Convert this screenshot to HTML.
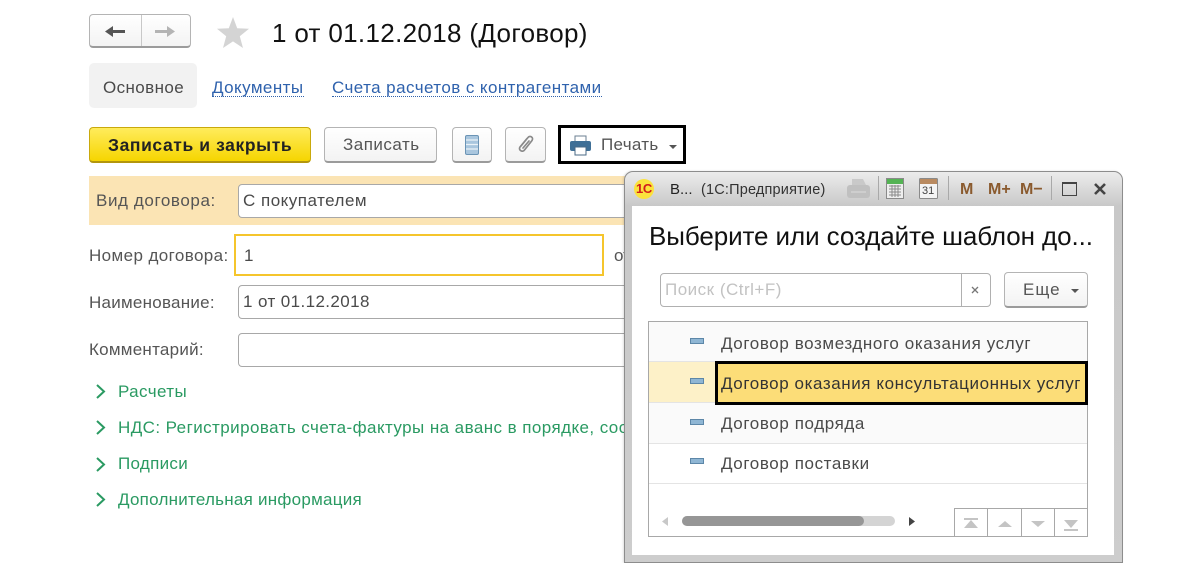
<!DOCTYPE html>
<html lang="ru"><head><meta charset="utf-8"><title>Договор</title>
<style>
html,body{margin:0;padding:0;background:#fff}
#p{position:relative;width:1200px;height:563px;overflow:hidden;background:#fff;font-family:"Liberation Sans",sans-serif;color:#4a4a4a;font-size:17px;filter:blur(.35px)}
.t{position:absolute;white-space:nowrap;line-height:20px;transform-origin:0 50%}
.b{position:absolute;box-sizing:border-box}
.btn{background:linear-gradient(#fff,#f3f3f3);border:1px solid #b4b4b4;border-bottom:2px solid #9b9b9b;border-radius:4px}
.inp{background:#fff;border:1px solid #a8a8a8;border-radius:4px}
.g{color:#2a9a62}
.l{color:#2f62ad;border-bottom:1px dotted #2f62ad;line-height:17px;letter-spacing:.43px}
.dash{position:absolute;left:690px;width:14px;height:6px;background:#8fb6d4;border:1px solid #5d87a8;box-sizing:border-box}
.r{letter-spacing:.6px}
svg{position:absolute;overflow:visible}
</style></head><body><div id="p">

<!-- nav -->
<div class="b btn" style="left:89px;top:14px;width:102px;height:34px"></div>
<div class="b" style="left:141px;top:15px;width:1px;height:31px;background:#c8c8c8"></div>
<svg style="left:105px;top:26px" width="20" height="12"><path d="M0 5.5 L8 0 V4 H20 V7 H8 V11 Z" fill="#555"/></svg>
<svg style="left:155px;top:26px" width="20" height="12"><path d="M20 5.5 L12 0 V4 H0 V7 H12 V11 Z" fill="#b4b4b4"/></svg>
<svg style="left:216px;top:17px" width="34" height="32"><path d="M17 0 L21.2 11.2 L33 11.8 L23.8 19.2 L27 31 L17 24.4 L7 31 L10.2 19.2 L1 11.8 L12.8 11.2 Z" fill="#d4d4d4"/></svg>
<div class="t" style="left:272px;top:18px;font-size:26px;line-height:30px;color:#111;letter-spacing:.33px">1 от 01.12.2018 (Договор)</div>

<!-- tabs -->
<div class="b" style="left:89px;top:63px;width:108px;height:45px;background:#f2f2f2;border-radius:5px"></div>
<div class="t" style="left:103px;top:78px;letter-spacing:.4px">Основное</div>
<div class="t l" style="left:212px;top:79px">Документы</div>
<div class="t l" style="left:332px;top:79px">Счета расчетов с контрагентами</div>

<!-- command bar -->
<div class="b" style="left:89px;top:127px;width:222px;height:36px;background:linear-gradient(#ffec5c,#f6d500);border:1px solid #c9a90c;border-bottom:2px solid #b3960d;border-radius:4px"></div>
<div class="t" style="left:108px;top:135px;font-weight:bold;color:#222;font-size:17.5px;letter-spacing:.6px">Записать и закрыть</div>
<div class="b btn" style="left:324px;top:127px;width:113px;height:36px"></div>
<div class="t" style="left:343px;top:135px;color:#555;letter-spacing:.5px">Записать</div>
<div class="b btn" style="left:452px;top:127px;width:40px;height:36px"></div>
<svg style="left:465px;top:135px" width="14" height="20"><rect x=".5" y=".5" width="13" height="19" rx="1.5" fill="#a9c6de" stroke="#6b94b5"/><path d="M1 5H13M1 9.5H13M1 14H13" stroke="#eaf2f8" stroke-width="1.2"/></svg>
<div class="b btn" style="left:505px;top:127px;width:41px;height:36px"></div>
<svg style="left:517px;top:134px" width="18" height="20" fill="none"><path d="M4 12 L11 3.5 C13 1 17 3.5 15 6.5 L7.5 16 C5.5 18.8 1 16 3 13 L10 4.5 M6 14 L12 7" stroke="#8a8a8a" stroke-width="1.7" stroke-linecap="round"/></svg>
<div class="b" style="left:558px;top:125px;width:128px;height:39px;border:3px solid #000;background:#fff"></div>
<svg style="left:570px;top:136px" width="21" height="20"><rect x="5" y="0" width="11" height="7" fill="#fff" stroke="#6b7f90"/><rect x="0" y="5" width="21" height="10" rx="2" fill="#3f6f96"/><rect x="5" y="11" width="11" height="8" fill="#fff" stroke="#4a6a85"/></svg>
<div class="t" style="left:601px;top:135px;color:#555;letter-spacing:.3px">Печать</div>
<svg style="left:669px;top:145px" width="8" height="5"><path d="M0 0H8L4 4Z" fill="#555"/></svg>

<!-- form -->
<div class="b" style="left:89px;top:176px;width:540px;height:49px;background:#fbe4b4"></div>
<div class="t" style="left:96px;top:191px;color:#555;letter-spacing:.6px">Вид договора:</div>
<div class="b inp" style="left:238px;top:184px;width:400px;height:34px"></div>
<div class="t" style="left:243px;top:191px;letter-spacing:.5px">С покупателем</div>

<div class="t" style="left:89px;top:246px;color:#555;letter-spacing:.4px">Номер договора:</div>
<div class="b" style="left:234px;top:234px;width:370px;height:42px;border:2px solid #f5c52c;background:#fff"></div>
<div class="t" style="left:244px;top:246px">1</div>
<div class="t" style="left:614px;top:246px;color:#555">от</div>

<div class="t" style="left:89px;top:293px;color:#555;letter-spacing:.25px">Наименование:</div>
<div class="b inp" style="left:238px;top:285px;width:400px;height:34px"></div>
<div class="t" style="left:243px;top:292px;letter-spacing:.4px">1 от 01.12.2018</div>

<div class="t" style="left:89px;top:340px;color:#555;letter-spacing:.25px">Комментарий:</div>
<div class="b inp" style="left:238px;top:333px;width:400px;height:34px"></div>

<svg style="left:96px;top:384px" width="10" height="128" fill="none" stroke="#2a9a62" stroke-width="2"><path d="M1 1L8 7.5L1 14M1 37L8 43.5L1 50M1 74L8 80.5L1 87M1 109L8 115.5L1 122"/></svg>
<div class="t g" style="left:118px;top:382px;letter-spacing:.4px">Расчеты</div>
<div class="t g" style="left:118px;top:418px;letter-spacing:.43px">НДС: Регистрировать счета-фактуры на аванс в порядке, соответствующем</div>
<div class="t g" style="left:118px;top:454px;letter-spacing:.3px">Подписи</div>
<div class="t g" style="left:118px;top:490px;letter-spacing:.25px">Дополнительная информация</div>

<!-- dialog -->
<div class="b" style="left:624px;top:171px;width:499px;height:392px;background:linear-gradient(#ececec,#c8c8c8 34px,#cdcdcd);border:1px solid #8d8d8d;border-radius:9px 9px 0 0;box-shadow:-1px 0 2px rgba(0,0,0,.12)"></div>
<div class="b" style="left:632px;top:206px;width:482px;height:349px;background:#fff"></div>
<svg style="left:634px;top:179px" width="20" height="20"><circle cx="10" cy="10" r="10" fill="#fbe23c"/></svg>
<div class="t" style="left:636px;top:180px;font-size:13px;line-height:17px;font-weight:bold;color:#d11c1c;letter-spacing:-.3px">1С</div>
<div class="t" style="left:670px;top:180px;font-size:15px;color:#222">В...</div>
<div class="t" style="left:701px;top:180px;font-size:14.5px;color:#333;letter-spacing:.18px">(1С:Предприятие)</div>
<svg style="left:847px;top:179px" width="23" height="20"><path d="M5 0H16L19 6H5Z" fill="#c9c9c9"/><rect x="0" y="6" width="23" height="13" rx="3" fill="#c0c0c0"/><path d="M4 13H19" stroke="#ddd"/></svg>
<div class="b" style="left:878px;top:176px;width:1px;height:24px;background:#a9a9a9"></div>
<svg style="left:886px;top:178px" width="18" height="21"><rect x=".5" y=".5" width="17" height="20" fill="#eee" stroke="#8a8a8a"/><rect x="1" y="1" width="16" height="5" fill="#54b354"/><path d="M3 8H15M3 11H15M3 14H15M3 17H15M6 7V19M9 7V19M12 7V19" stroke="#8a8a8a"/></svg>
<svg style="left:919px;top:178px" width="19" height="21"><rect x=".5" y=".5" width="18" height="20" rx="1" fill="#f4f4f4" stroke="#8a8a8a"/><rect x="1" y="1" width="17" height="5" fill="#b98a60"/></svg>
<div class="t" style="left:922px;top:184px;font-size:11px;line-height:14px;color:#444">31</div>
<div class="b" style="left:948px;top:176px;width:1px;height:24px;background:#a9a9a9"></div>
<div class="t" style="left:960px;top:180px;font-weight:bold;font-size:16px;color:#8a5a2e">M</div>
<div class="t" style="left:988px;top:180px;font-weight:bold;font-size:16px;color:#8a5a2e">M+</div>
<div class="t" style="left:1020px;top:180px;font-weight:bold;font-size:16px;color:#8a5a2e">M−</div>
<div class="b" style="left:1051px;top:176px;width:1px;height:24px;background:#a9a9a9"></div>
<div class="b" style="left:1062px;top:182px;width:15px;height:14px;border:1.5px solid #444;border-top-width:2.5px"></div>
<svg style="left:1094px;top:183px" width="12" height="12"><path d="M1 1L11 11M11 1L1 11" stroke="#444" stroke-width="2.6"/></svg>

<div class="t" style="left:649px;top:220px;font-size:26px;line-height:32px;color:#111;letter-spacing:-.09px">Выберите или создайте шаблон до...</div>

<div class="b inp" style="left:660px;top:273px;width:331px;height:34px;border-color:#b0b0b0"></div>
<div class="b" style="left:961px;top:274px;width:1px;height:32px;background:#b0b0b0"></div>
<div class="t" style="left:665px;top:280px;color:#c2c2c2;letter-spacing:.5px">Поиск (Ctrl+F)</div>
<svg style="left:971px;top:286px" width="8" height="8"><path d="M1 1L7 7M7 1L1 7" stroke="#777" stroke-width="1.3"/></svg>
<div class="b btn" style="left:1004px;top:272px;width:84px;height:36px"></div>
<div class="t" style="left:1023px;top:280px;color:#555;letter-spacing:1px">Еще</div>
<svg style="left:1071px;top:289px" width="8" height="5"><path d="M0 0H8L4 4Z" fill="#555"/></svg>

<!-- table -->
<div class="b" style="left:648px;top:321px;width:440px;height:216px;border:1px solid #a8a8a8;background:#fff"></div>
<div class="b" style="left:649px;top:322px;width:438px;height:40px;background:#fafafa;border-bottom:1px solid #e4e4e4"></div>
<div class="b" style="left:649px;top:362px;width:70px;height:41px;background:#fdf1c8;border-bottom:1px solid #e4e4e4"></div>
<div class="b" style="left:649px;top:403px;width:438px;height:41px;background:#fafafa;border-bottom:1px solid #e4e4e4"></div>
<div class="b" style="left:649px;top:444px;width:438px;height:40px;background:#fff;border-bottom:1px solid #e4e4e4"></div>
<div class="b" style="left:715px;top:361px;width:373px;height:44px;border:3px solid #000;background:#fcdd78"></div>
<div class="dash" style="top:338px"></div>
<div class="dash" style="top:378px"></div>
<div class="dash" style="top:419px"></div>
<div class="dash" style="top:458px"></div>
<div class="t r" style="left:721px;top:334px">Договор возмездного оказания услуг</div>
<div class="t r" style="left:721px;top:374px;color:#333;letter-spacing:.58px">Договор оказания консультационных услуг</div>
<div class="t r" style="left:721px;top:414px">Договор подряда</div>
<div class="t r" style="left:721px;top:454px">Договор поставки</div>

<svg style="left:662px;top:517px" width="6" height="9"><path d="M6 0V9L0 4.5Z" fill="#c8c8c8"/></svg>
<div class="b" style="left:682px;top:516px;width:213px;height:10px;background:#d4d4d4;border-radius:5px"></div>
<div class="b" style="left:682px;top:516px;width:182px;height:10px;background:#969696;border-radius:5px"></div>
<svg style="left:909px;top:517px" width="6" height="9"><path d="M0 0V9L6 4.5Z" fill="#444"/></svg>
<div class="b" style="left:954px;top:508px;width:134px;height:29px;border:1px solid #a8a8a8;background:#fff"></div>
<div class="b" style="left:987px;top:508px;width:1px;height:29px;background:#a8a8a8"></div>
<div class="b" style="left:1021px;top:508px;width:1px;height:29px;background:#a8a8a8"></div>
<div class="b" style="left:1054px;top:508px;width:1px;height:29px;background:#a8a8a8"></div>
<svg style="left:964px;top:518px" width="14" height="12" fill="#c4c4c4"><rect y="0" width="14" height="2"/><path d="M7 2L14 10H0Z"/></svg>
<svg style="left:998px;top:521px" width="14" height="7" fill="#c4c4c4"><path d="M7 0L14 6H0Z"/></svg>
<svg style="left:1031px;top:521px" width="14" height="7" fill="#c4c4c4"><path d="M7 6L14 0H0Z"/></svg>
<svg style="left:1064px;top:520px" width="14" height="12" fill="#c4c4c4"><path d="M7 8L14 0H0Z"/><rect y="9" width="14" height="2"/></svg>

</div></body></html>
